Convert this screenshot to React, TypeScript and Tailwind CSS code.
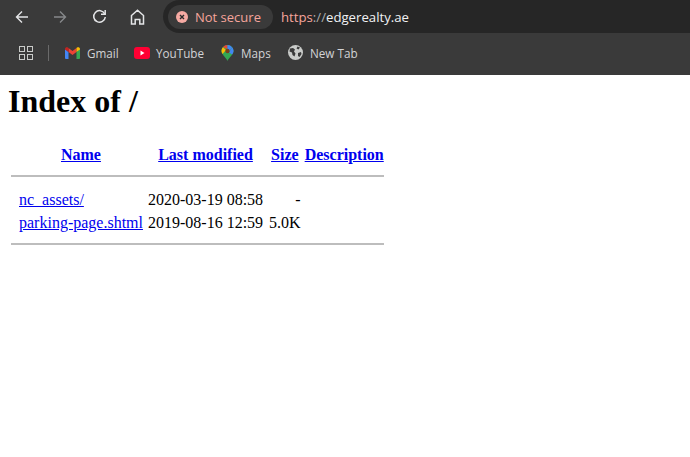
import React from "react";

const SANS = "font-['Open_Sans','Noto_Sans',sans-serif]";

function Back({ className }: { className: string }) {
  return (
    <svg width="14" height="14" viewBox="0 0 14 14" fill="none" stroke="currentColor" strokeWidth="1.4" className={className}>
      <path d="M13 7H1.500M7 1.500 1.500 7 7 12.500" />
    </svg>
  );
}

function Bookmark({ icon, label, className }: { icon: React.ReactNode; label: string; className: string }) {
  return (
    <div className={`flex items-center ${className}`}>
      {icon}
      <span className="text-[11.7px] leading-4 text-[#d2d3d5]">{label}</span>
    </div>
  );
}

function Toolbar() {
  return (
    <div className={`bg-[#3a3a3a] h-[75px] ${SANS}`}>
      <div className="flex items-center h-[33px]">
        <Back className="ml-[15px] text-[#e4e5e7]" />
        <Back className="ml-[24px] text-[#86888a] rotate-180" />
        <svg width="15" height="15" viewBox="0 0 15 15" fill="none" stroke="#e4e5e7" strokeWidth="1.5" className="ml-[25px]">
          <path d="M12.700 4.800A5.800 5.800 0 1 0 13.300 8" />
          <path d="M13.200 1v4.200H9" />
        </svg>
        <svg width="15" height="16" viewBox="0 0 15 16" fill="none" stroke="#e4e5e7" strokeWidth="1.500" className="ml-[23px]">
          <path d="M1.500 6.500 7.500 1.200l6 5.300V15h-3.700v-4.500H5.200V15H1.500z" />
        </svg>
        <div className="ml-[18px] h-[33px] flex-1 flex items-center bg-[#262626] rounded-l-full pl-[5px]">
          <div className="h-[24px] w-[105px] flex items-center rounded-full bg-[#3a3a3a] pl-[8px]">
            <svg width="12" height="12" viewBox="0 0 12 12">
              <circle cx="6" cy="6" r="6" fill="#f6aaa3" />
              <path d="M4 4l4 4M8 4l-4 4" stroke="#2a2a2a" strokeWidth="1.400" />
            </svg>
            <span className="ml-[7px] text-[13px] leading-5 text-[#f6a59c]">Not secure</span>
          </div>
          <div className="ml-[8px] text-[13.200px] leading-5 text-[#f1f2f3]">
            <span className="text-[#f6a59c]">https</span>
            <span className="text-[#a9abad]">://</span>edgerealty.ae
          </div>
        </div>
      </div>
      <div className="flex items-center h-[42px] pb-[3px]">
        <div className="ml-[19px] grid grid-cols-2 gap-[2px]">
          <span className="w-[6px] h-[6px] border border-[#c9cbc9]" />
          <span className="w-[6px] h-[6px] border border-[#c9cbc9]" />
          <span className="w-[6px] h-[6px] border border-[#c9cbc9]" />
          <span className="w-[6px] h-[6px] border border-[#c9cbc9]" />
        </div>
        <div className="ml-[15px] mr-[16px] w-[1px] h-[16px] bg-[#6a6a6a]" />
        <Bookmark
          label="Gmail"
          className="w-[69px] gap-[7px]"
          icon={
            <svg width="15" height="12" viewBox="0 0 15 12">
              <path d="M0 2v9a1 1 0 0 0 1 1h2.500V5z" fill="#4285f4" />
              <path d="M15 2v9a1 1 0 0 1-1 1h-2.500V5z" fill="#34a853" />
              <path d="M3.500 5 7.500 8l4-3V1l-4 3-4-3z" fill="#ea4335" />
              <path d="M0 2c0-1.500 1.800-2.200 3-1.400l.5.4v4L0 2.400z" fill="#c5221f" />
              <path d="M15 2c0-1.500-1.800-2.200-3-1.400l-.5.4v4L15 2.400z" fill="#fbbc04" />
            </svg>
          }
        />
        <Bookmark
          label="YouTube"
          className="w-[87px] gap-[6px]"
          icon={
            <svg width="16" height="12" viewBox="0 0 16 12">
              <rect width="16" height="12" rx="3" fill="#ff0033" />
              <path d="M6.500 3.500 10.500 6l-4 2.500z" fill="#fff" />
            </svg>
          }
        />
        <Bookmark
          label="Maps"
          className="w-[67px] gap-[7px]"
          icon={
            <svg width="13" height="16" viewBox="0 0 12 16">
              <path d="M6 16C5 13 0 9.500 0 6a6 6 0 0 1 12 0c0 3.500-5 7-6 10z" fill="#34a853" />
              <path d="M1.400 2.200A6 6 0 0 1 6 0v4z" fill="#ea4335" />
              <path d="M6 0a6 6 0 0 1 4.600 2.200L8 6 6 4z" fill="#4285f4" />
              <path d="M0 6c0-1.500.5-2.800 1.400-3.800L4.500 5 1 9C.4 8 0 7 0 6z" fill="#fbbc04" />
              <path d="M12 6c0 1.200-.6 2.400-1.300 3.500L7.500 7.500l3.100-5.300C11.500 3.200 12 4.500 12 6z" fill="#4285f4" />
              <circle cx="6" cy="6" r="2.200" fill="#7b3f1d" />
            </svg>
          }
        />
        <Bookmark
          label="New Tab"
          className="gap-[7px]"
          icon={
            <svg width="15" height="15" viewBox="0 0 15 15">
              <circle cx="7.500" cy="7.500" r="7.500" fill="#c9cbc9" />
              <path d="M2 3.500 5 3l2 1.500-1 2 1.500 2-1 3L4.500 10 4 7.500 1.500 6.500zM9.500 1.500l2.500 1-1.500 2-2-1zM10 8l3-1 .5 2-2 3-1.500-1z" fill="#3a3a3a" />
            </svg>
          }
        />
      </div>
    </div>
  );
}

function Th({ children, className }: { children: string; className?: string }) {
  return (
    <th className={`p-[1px] font-bold align-middle text-center ${className ?? ""}`}>
      <a href="#" className="text-[#0000ee] underline">{children}</a>
    </th>
  );
}

function Rule() {
  return (
    <tr>
      <th colSpan={4} className="p-[1px]">
        <hr className="mt-[7px] mb-[9px] border-0 border-t-2 border-[#bdbdbd]" />
      </th>
    </tr>
  );
}

export default function App() {
  return (
    <div className="w-[690px] h-[457px] bg-white overflow-hidden">
      <Toolbar />
      <div className="pl-[8px] font-['Liberation_Serif',serif] text-black">
        <h1 className="mt-[8px] text-[32px] leading-[37px] font-bold">Index of /</h1>
        <table className="mt-[22px] border-separate border-spacing-[2px] text-[16px] leading-[19px]">
          <tbody>
            <tr>
              <Th className="pl-[9px] pr-[2px]">Name</Th>
              <Th className="pr-[2px]">Last modified</Th>
              <Th className="pl-[2px]">Size</Th>
              <Th>Description</Th>
            </tr>
            <Rule />
            <tr>
              <td className="p-[1px] pl-[9px] pr-[2px]"><a href="#" className="text-[#0000ee] underline">nc_assets/</a></td>
              <td className="p-[1px] pr-[2px]">2020-03-19 08:58</td>
              <td className="p-[1px] pl-[2px] text-right">-</td>
              <td className="p-[1px]"></td>
            </tr>
            <tr>
              <td className="p-[1px] pl-[9px] pr-[2px]"><a href="#" className="text-[#0000ee] underline">parking-page.shtml</a></td>
              <td className="p-[1px] pr-[2px]">2019-08-16 12:59</td>
              <td className="p-[1px] pl-[2px] text-right">5.0K</td>
              <td className="p-[1px]"></td>
            </tr>
            <Rule />
          </tbody>
        </table>
      </div>
    </div>
  );
}
